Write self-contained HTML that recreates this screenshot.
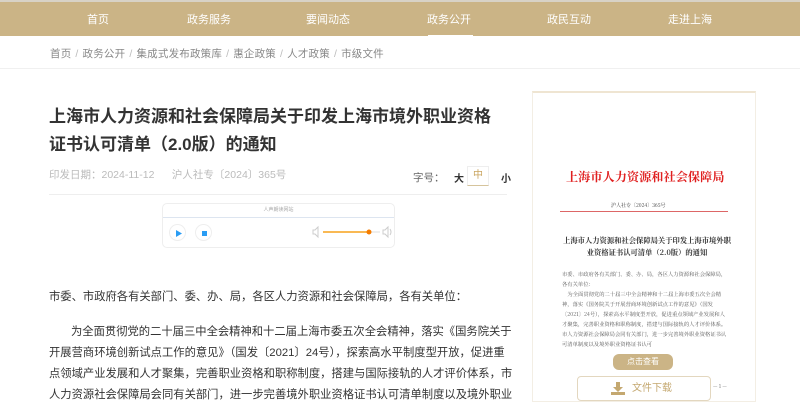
<!DOCTYPE html>
<html><head><meta charset="utf-8"><style>
*{margin:0;padding:0;box-sizing:border-box}
body{width:800px;height:402px;overflow:hidden;background:#fff;font-family:"Liberation Sans","Noto Sans CJK SC",sans-serif;position:relative}
.nav{position:absolute;top:0;left:0;width:800px;height:36px;background:#cbb486;border-top:2px solid #d8d2c6}
.nav span{position:absolute;top:9px;color:#fff;font-size:11px;transform:translateX(-50%)}
.ul{position:absolute;left:428px;top:33px;width:45px;height:3px;background:#fff}
.bc{position:absolute;top:46px;left:50px;font-size:10.5px;color:#888;letter-spacing:0.2px}
.bc i{font-style:normal;color:#bbb;margin:0 4px}
.hl{position:absolute;left:0;top:68px;width:800px;height:1px;background:#f0f0f0}
h1{position:absolute;left:49px;top:103px;width:480px;font-size:17px;line-height:28px;color:#333;font-weight:bold;white-space:nowrap}
.meta{position:absolute;left:49px;top:167px;font-size:10.5px;color:#bbb}
.fs{position:absolute;left:413px;top:170px;font-size:10.5px;color:#666}
.fs b{position:absolute;top:0;font-size:10px;color:#333}
.zh{position:absolute;left:467px;top:166px;width:22px;height:20px;border:1px solid #eee;border-bottom:1px solid #d6c49c;color:#c9a45e;font-size:10px;text-align:center;line-height:18px}
.sep{position:absolute;left:49px;top:194px;width:458px;height:1px;background:#eee}
.pl{position:absolute;left:162px;top:203px;width:233px;height:45px;border:1px solid #eee;border-radius:5px}
.pl .t{height:14px;border-bottom:1px solid #dde5f0;font-size:5px;color:#aaa;text-align:center;line-height:13px}
.c{position:absolute;border:1px solid #eee;border-radius:50%;width:17px;height:17px;top:20px}
.txt{position:absolute;left:49px;font-size:11.3px;color:#333;line-height:21px;width:480px;white-space:nowrap}
.rp{position:absolute;left:532px;top:91px;width:224px;height:311px;border:1px solid #f3eee4;border-top:2px solid #efe5d2}
.rt{position:absolute;left:566px;top:168px;font-size:12.2px;color:#e02020;font-family:"Noto Serif CJK SC",serif;font-weight:bold;letter-spacing:0}
.sm{position:absolute;font-family:"Noto Serif CJK SC",serif;color:#333}
</style></head><body>
<div class="nav">
<span style="left:98px">首页</span><span style="left:209px">政务服务</span><span style="left:328px">要闻动态</span><span style="left:449px">政务公开</span><span style="left:569px">政民互动</span><span style="left:690px">走进上海</span>
<div class="ul"></div></div>
<div class="bc">首页<i>/</i>政务公开<i>/</i>集成式发布政策库<i>/</i>惠企政策<i>/</i>人才政策<i>/</i>市级文件</div>
<div class="hl"></div>
<h1>上海市人力资源和社会保障局关于印发上海市境外职业资格<br>证书认可清单（2.0版）的通知</h1>
<div class="meta">印发日期：2024-11-12 &nbsp;&nbsp;&nbsp;&nbsp; 沪人社专〔2024〕365号</div>
<div class="fs">字号：<b style="left:41px">大</b><b style="left:88px">小</b></div>
<div class="zh">中</div>
<div class="sep"></div>
<div class="pl"><div class="t">人声朗读网站</div>
<div class="c" style="left:6px"><svg width="17" height="17"><path d="M6 5L12 8.5L6 12Z" fill="#2a9df4"/></svg></div>
<div class="c" style="left:32px"><svg width="17" height="17"><rect x="6" y="6" width="5" height="5" fill="#2a9df4"/></svg></div>
<svg style="position:absolute;left:148px;top:20px" width="82" height="16"><path d="M2 6h2l3-3v10l-3-3H2z" fill="none" stroke="#ccc"/><line x1="12" y1="8" x2="60" y2="8" stroke="#f7a21b" stroke-width="1.5"/><line x1="60" y1="8" x2="69" y2="8" stroke="#ddd"/><circle cx="58" cy="8" r="2.5" fill="#f57c00"/><path d="M72 6h2l3-3v10l-3-3h-2z M79 5q2 3 0 6" fill="none" stroke="#ccc"/></svg>
</div>
<div class="txt" style="top:287px">市委、市政府各有关部门、委、办、局，各区人力资源和社会保障局，各有关单位：</div>
<div class="txt" style="top:322px"><span style="padding-left:22px"></span>为全面贯彻党的二十届三中全会精神和十二届上海市委五次全会精神，落实《国务院关于<br>开展营商环境创新试点工作的意见》（国发〔2021〕24号），探索高水平制度型开放，促进重<br>点领域产业发展和人才聚集，完善职业资格和职称制度，搭建与国际接轨的人才评价体系，市<br>人力资源社会保障局会同有关部门，进一步完善境外职业资格证书认可清单制度以及境外职业</div>
<div class="rp"></div>
<div class="rt">上海市人力资源和社会保障局</div>
<div class="sm" style="left:611px;top:202px;font-size:5px">沪人社专〔2024〕365号</div>
<div style="position:absolute;left:560px;top:211px;width:168px;height:1px;background:#d66"></div>
<div class="sm" style="left:562px;top:235px;font-size:7.3px;line-height:12px;width:170px;text-align:center;font-weight:bold">上海市人力资源和社会保障局关于印发上海市境外职业资格证书认可清单（2.0版）的通知</div>
<div class="sm" style="left:562px;top:269px;font-size:5.3px;line-height:10px;width:168px;color:#555">市委、市政府各有关部门、委、办、局，各区人力资源和社会保障局，各有关单位：<br>&nbsp;&nbsp;&nbsp;&nbsp;为全面贯彻党的二十届三中全会精神和十二届上海市委五次全会精神，落实《国务院关于开展营商环境创新试点工作的意见》（国发〔2021〕24号），探索高水平制度型开放，促进重点领域产业发展和人才聚集，完善职业资格和职称制度，搭建与国际接轨的人才评价体系。市人力资源社会保障局会同有关部门，进一步完善境外职业资格证书认可清单制度以及境外职业资格证书认可</div>
<div style="position:absolute;left:613px;top:354px;width:60px;height:16px;background:#cbb486;border-radius:6px;color:#fff;font-size:8px;text-align:center;line-height:16px">点击查看</div>
<div style="position:absolute;left:577px;top:376px;width:134px;height:25px;border:1px solid #e3d7bf;border-radius:4px;background:#fff;color:#c4a870;font-size:10px;line-height:23px;padding-left:54px">文件下载
<svg style="position:absolute;left:33px;top:5px" width="14" height="13"><path d="M5 0h4v5h3l-5 5-5-5h3z M0 10v3h14v-3" fill="#c4a870"/></svg></div>
<div class="sm" style="left:713px;top:383px;font-size:5px;color:#666">— 1 —</div>
</body></html>
